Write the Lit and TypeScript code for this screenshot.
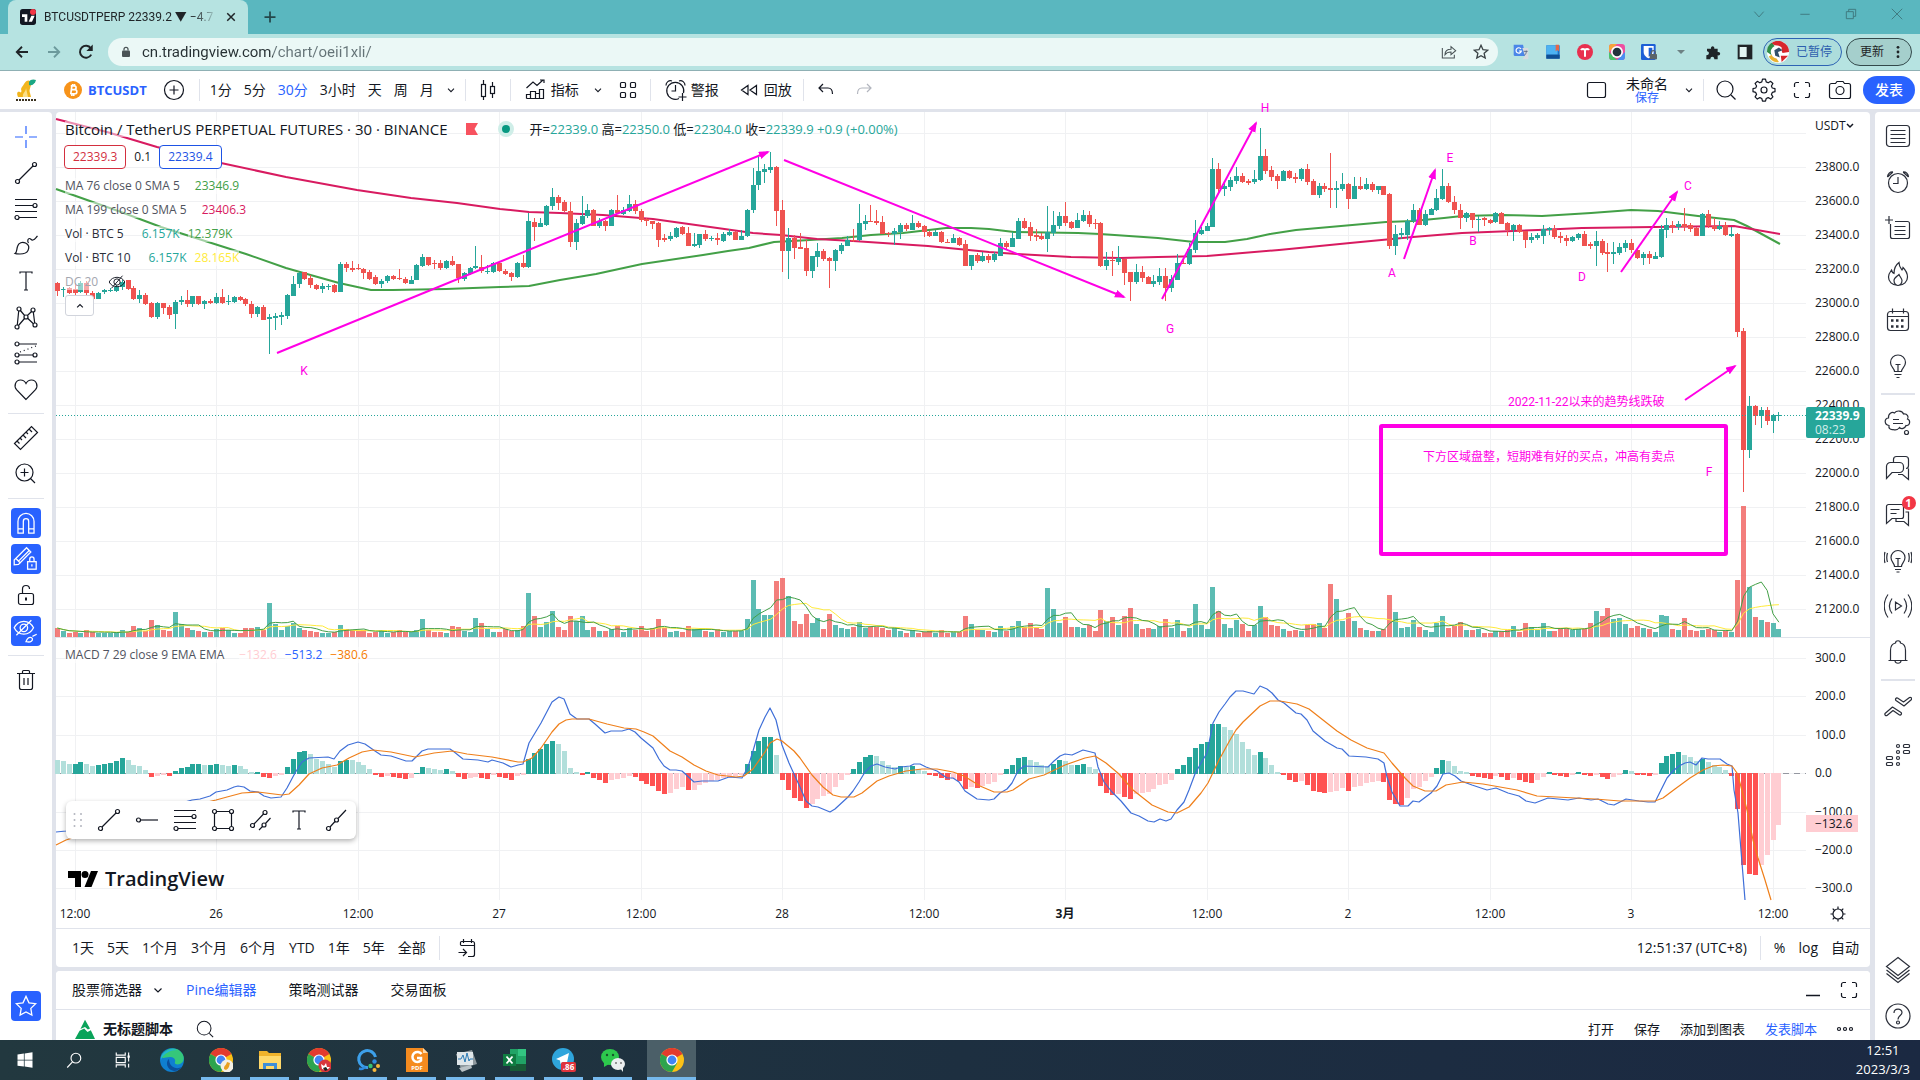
import { LitElement, html, svg, css } from "lit";
import { customElement } from "lit/decorators.js";

/* ---------- market data: one entry per 30-minute bar, in chart units ---------- */

// u = rising, d = falling; body top, body bottom, wick top, wick bottom
const CANDLES = `
d283,291,282,296 u289,290,287,297 d288,293,287,294
d289,293,283,295 u283,292,281,293 d283,293,281,297 d293,299,291,300 u293,299,292,299 u290,292,289,294 u290,291,288,292 u287,291,285,292 u282,287,280,290 d280,289,280,290
d288,299,286,300 u295,299,290,303 d295,304,293,305 d303,317,302,318 u303,317,302,319 d303,308,303,314 d307,315,305,319 u302,314,300,329 u300,302,296,305 d300,304,290,307
u296,304,296,307 d296,304,296,305 u301,304,300,309 d301,303,299,304 u297,303,293,304 d297,303,289,304 u301,302,295,305 u297,302,296,303 d297,300,296,301 d299,304,298,306
d304,314,301,318 u307,314,306,317 d307,320,305,320 u317,319,314,354 u316,318,313,330 u315,317,312,325 u295,316,294,319 u284,296,276,296 u273,284,272,288 d272,279,272,280
d278,285,275,288 d285,289,284,290 u286,289,283,293 u286,287,284,290 d285,292,284,293 u264,292,262,292 d264,268,262,272 d268,270,261,272 d268,269,264,270 d269,273,268,279
d272,279,270,280 d277,284,275,285 u281,284,279,288 u276,281,275,283 d276,279,275,280 d278,279,269,280 d279,283,277,284 u280,284,276,284 u265,280,264,280 u257,266,254,267
d257,265,257,266 d263,264,260,269 d263,268,260,270 u261,268,260,269 d261,265,256,266 d264,278,264,283 u273,279,272,281 u268,274,267,275 u266,268,246,269 d267,271,255,273
u271,272,265,274 u263,272,262,273 d263,271,262,272 d271,274,269,275 d273,277,272,281 u263,277,262,278 d263,267,255,268 u221,267,213,268 d222,227,218,241 u223,227,218,227
u206,225,205,226 u197,206,188,210 d197,203,195,210 d202,211,200,212 d211,242,202,247 u223,242,219,250 u216,224,196,225 u210,216,204,218 d210,226,209,226 u221,226,218,228
d221,226,220,231 u210,226,209,226 d210,213,195,214 u210,214,207,215 u204,211,195,212 d204,211,200,214 d211,220,209,222 d219,221,218,226 d221,224,221,229 d223,240,222,247
d238,240,234,242 u236,239,232,241 u228,237,227,238 d227,234,226,235 d233,246,227,246 u244,246,233,247 u234,245,234,248 d234,239,230,241 u238,239,236,241 d238,240,233,245
u234,241,232,242 u232,235,229,236 d232,240,231,240 u236,240,230,240 u210,236,209,237 u185,210,168,213 u171,185,157,190 u169,172,164,183 u167,170,152,173 d167,211,166,226
d210,251,200,272 u238,251,228,279 d238,248,235,259 d247,249,233,249 d248,271,240,276 u256,271,256,278 u251,257,243,267 d251,259,249,261 d258,261,257,288 u250,261,249,271
u245,251,243,254 u240,246,236,246 d240,241,229,242 u223,240,204,241 u221,224,215,230 d221,222,205,222 d221,223,210,225 d222,234,216,234 d233,234,232,237 u231,234,228,245
u225,232,223,239 d225,229,223,231 u223,230,215,230 d223,227,221,228 d226,232,225,237 d232,236,231,237 u232,236,230,236 d232,242,231,243 d242,243,239,243 u238,243,234,243
d238,245,237,246 d244,266,240,266 u255,266,255,270 d255,261,253,263 u256,261,252,262 d256,260,254,263 u254,260,252,262 u243,256,238,256 d243,247,241,249 u238,247,232,247
u221,239,218,239 d221,228,218,229 d227,236,222,241 d235,237,229,241 d236,239,233,240 u232,239,206,252 u225,233,211,236 u216,226,212,229 d216,223,202,226 d222,228,221,229
u220,228,213,228 u215,221,210,222 d215,224,211,227 d223,224,219,229 d223,266,222,267 u260,266,252,270 d260,261,251,276 u258,262,246,265 d259,273,259,285 d272,282,272,301
u272,282,264,284 d272,278,266,282 d277,284,276,284 u281,284,275,287 u276,282,268,285 d276,288,268,301 u279,288,275,292 u263,280,254,280 d263,264,259,264 u249,264,243,265
u233,250,220,253 u230,234,227,235 u226,231,223,231 u169,227,158,227 d169,189,163,192 u186,189,182,196 u180,187,177,191 u176,181,167,184 d176,182,173,183 d181,183,179,185
u179,182,170,184 u156,180,128,181 d156,171,149,174 d170,177,166,181 d176,181,174,189 u171,181,170,181 d171,178,170,179 d177,179,173,183 u169,179,168,181 d169,182,164,185
d181,195,179,195 u186,195,183,198 d186,189,183,192 d188,190,153,208 u188,190,181,208 u184,189,173,191 d184,199,183,209 u186,199,177,199 d186,189,177,190 u184,189,178,190
d184,190,182,192 u186,190,186,194 d186,195,186,195 d194,246,193,249 u234,246,225,255 u233,235,228,239 u221,235,219,240 u210,221,204,223 d210,225,208,225 u214,225,210,226
u209,215,208,215 u198,210,189,211 u186,199,169,200 d186,202,183,203 d202,210,196,214 d210,218,204,229 u213,218,212,222 d213,220,213,228 u219,220,216,232 d218,220,217,226
d220,223,219,224 u213,222,212,223 d213,224,212,224 d223,230,222,236 u225,230,224,241 d225,232,224,233 d231,240,231,248 u237,240,233,243 u235,238,233,240 u229,236,225,244
u228,230,227,235 d229,237,225,239 d236,238,232,243 d238,241,235,246 u237,241,236,242 u234,238,233,240 d234,246,231,246 d244,246,242,249 u241,246,231,266 d241,253,239,255
d252,254,243,272 u252,254,242,264 u247,253,243,255 u243,248,240,252 d243,250,239,253 d250,258,249,259 u254,258,252,265 d254,258,251,264 u256,259,252,259 u229,257,225,258
u225,230,218,238 d225,227,221,233 u224,227,221,230 d224,227,208,231 d225,229,223,232 d228,236,227,236 u214,236,213,236 d214,226,210,228 d226,229,218,231 u226,229,221,230
d225,235,222,236 u234,236,227,237 d234,332,233,337 d331,450,328,492 u406,450,396,458 d406,416,405,425 u410,416,407,428 d410,421,407,425 u415,421,414,433 u415,416,412,421
`.trim().split(/\s+/).map((t) => {
  const [top, bottom, high, low] = t.slice(1).split(",").map(Number);
  return { up: t[0] === "u", top, bottom, high, low };
});

const VOLUME = [
  9, 6, 4,
  5, 4, 7, 5, 4, 4, 4, 5, 7, 5,
  11, 9, 6, 17, 12, 7, 6, 25, 13, 9,
  7, 6, 5, 5, 8, 9, 7, 4, 4, 9,
  9, 10, 7, 34, 13, 7, 11, 14, 9, 7,
  6, 5, 4, 4, 5, 12, 8, 7, 6, 7,
  4, 5, 7, 4, 5, 7, 5, 5, 7, 18,
  7, 5, 5, 4, 11, 10, 6, 5, 19, 14,
  8, 5, 5, 8, 6, 7, 11, 44, 21, 10,
  15, 26, 10, 7, 21, 16, 21, 7, 10, 6,
  6, 8, 11, 5, 9, 7, 11, 6, 9, 18,
  9, 5, 6, 5, 11, 8, 8, 6, 5, 8,
  5, 6, 6, 6, 18, 57, 28, 22, 22, 56,
  59, 41, 16, 13, 23, 14, 19, 8, 23, 12,
  9, 8, 10, 15, 9, 10, 10, 9, 7, 9,
  6, 4, 7, 4, 5, 6, 4, 7, 4, 5,
  5, 21, 13, 7, 7, 6, 5, 11, 6, 11,
  16, 10, 14, 9, 8, 49, 28, 14, 20, 10,
  10, 9, 12, 6, 27, 16, 20, 12, 21, 29,
  13, 8, 9, 8, 11, 18, 9, 17, 6, 9,
  33, 12, 8, 50, 26, 13, 9, 17, 13, 6,
  12, 31, 20, 12, 11, 8, 6, 7, 6, 12,
  13, 14, 9, 53, 38, 16, 24, 16, 9, 7,
  6, 6, 8, 42, 25, 9, 10, 17, 10, 7,
  5, 14, 21, 9, 11, 15, 7, 7, 8, 4,
  4, 6, 6, 7, 11, 5, 14, 10, 7, 14,
  6, 6, 9, 9, 7, 8, 8, 14, 26, 21,
  29, 18, 19, 13, 9, 11, 9, 8, 5, 22,
  21, 8, 7, 19, 7, 6, 7, 8, 7, 5,
  6, 5, 57, 131, 50, 20, 17, 15, 14, 8,
];

const HISTOGRAM = [
  13, 12, 9,
  9, 11, 9, 7, 8, 9, 10, 12, 15, 13,
  8, 7, 3, -3, -2, -1, -2, 2, 5, 6,
  9, 9, 8, 8, 9, 8, 7, 8, 7, 4,
  1, 1, -3, -4, -2, -1, 6, 14, 21, 22,
  19, 14, 12, 9, 6, 12, 13, 12.8, 11, 8,
  4, -1, -3, -2, -3, -4, -5, -4, 0, 6,
  5.5, 4, 3, 4, 2, -3, -5, -4, -3, -4,
  -4.5, -1, -3, -4, -6, -2, -1, 14, 20, 24,
  29, 32, 29, 22, 5, 1, -1, 1, -4, -6,
  -9, -6, -5, -4, -2, -2.5, -7, -10, -12, -17,
  -20, -19, -15, -13, -16, -15.5, -11, -9, -7, -6,
  -4, -3, -2, -1, 9, 22, 32, 36, 36.5, 18,
  -6, -16, -24, -27, -34, -30, -25, -22, -20, -13,
  -6, -1, 4, 11, 16, 18, 17, 12, 8, 6,
  7, 6, 7, 4, 2, -1, -2, -4, -6, -5,
  -7, -15, -13, -14, -12, -10, -8, -1, 4, 8,
  15, 16, 13, 11, 8, 7, 9, 13, 12, 8,
  8, 9, 6, 4, -12, -19, -21, -20, -23, -25,
  -20, -19, -18, -15, -11, -10, -6, 4, 8, 16,
  25, 29, 31, 49, 49.5, 46, 43, 39, 31, 24,
  18, 21, 15, 8, 1, -1, -6, -8, -7, -11,
  -17, -18, -18.5, -18, -17, -14, -17, -13, -12, -9,
  -8, -7, -8, -26, -30, -30.5, -24, -15, -13, -7,
  -3, 5, 13, 12, 7, 2, 1, -2, -3, -4,
  -4.5, -2, -3, -6, -4, -6, -8, -8.5, -6, -3,
  1, -0.5, -1.5, -2.5, -1, 1, -1, -1.5, -0.5, -2.5,
  -4.5, -3, -1, 3, 2, -0.5, -1, -1.5, -0.5, 10,
  17, 19, 21, 18, 16, 12, 14, 11, 8, 6,
  3, -2, -35, -91, -100, -101, -91, -81, -66, -51,
];

const MA76 =
  "56,189 121,212 161,227 246,254 286,268 307,274 339,283 371,290 393,290 446,289 500,287 529,286 560,280 596,274 642,264 703,255 728,251 749,248 774,242 810,240 842,238 871,235 903,233 946,228 971,228 989,229 1014,232 1078,233 1100,234 1158,238 1194,242 1225,242 1247,239 1270,234 1296,230 1341,226 1386,222 1413,221 1444,218 1462,216 1502,215 1542,216 1591,213 1631,210 1658,211 1698,216 1734,220 1747,226 1780,244";
const MA199 =
  "56,119 107,132 157,147 221,163 286,177 357,190 411,198 457,203 500,209 529,212 560,213 603,215 653,219 703,226 753,233 781,235 817,239 853,241 928,246 989,252 1017,254 1071,257 1120,258 1158,257 1207,256 1279,250 1350,243 1413,237 1462,233 1538,230 1582,228 1654,227 1734,226 1780,234";
const MACD_LINE =
  "56,832 66,831 120,820 192,800 200,799 210,796 216,792 227,790 234,787 238,786 244,787 250,791 258,792 264,796 271,798 281,797 287,788 295,773 302,762 309,758 328,757 334,759 340,751 348,745 358,742 365,744 375,751 381,755 391,756 406,761 412,761 422,751 428,749 450,749 453,751 463,759 478,760 488,762 492,760 503,763 511,767 518,765 523,764 529,743 541,723 552,702 559,697 564,699 570,714 577,719 589,719 595,724 605,733 611,731 622,731 629,729 635,732 641,738 653,748 659,759 664,766 670,770 676,770 682,771 694,782 702,781 718,781 729,777 742,778 748,767 753,751 759,730 765,717 770,708 776,720 782,745 789,763 794,774 800,787 806,801 812,806 818,807 830,812 835,809 848,797 853,791 859,782 865,772 871,766 877,764 885,767 895,769 901,767 910,766 914,764 920,764 926,767 937,771 947,778 953,778 959,782 965,791 977,799 989,800 994,799 1000,793 1007,789 1012,783 1018,771 1024,766 1048,767 1054,761 1060,756 1065,754 1072,755 1083,750 1095,753 1098,767 1104,782 1112,792 1121,801 1131,813 1139,816 1148,821 1154,822 1160,819 1166,821 1171,819 1177,810 1184,802 1189,790 1195,774 1201,763 1207,753 1213,723 1219,712 1225,704 1230,697 1236,691 1243,691 1254,694 1260,686 1267,689 1272,693 1278,700 1284,703 1296,713 1301,714 1307,720 1313,731 1325,741 1337,748 1342,749 1349,756 1366,757 1378,759 1384,763 1387,777 1392,792 1400,806 1408,806 1413,801 1419,802 1431,793 1437,786 1443,774 1449,773 1455,776 1461,781 1472,785 1487,790 1496,788 1508,793 1519,796 1526,801 1535,803 1548,798 1568,800 1579,798 1591,800 1598,799 1608,804 1614,805 1626,799 1639,801 1648,802 1655,802 1661,790 1667,778 1673,771 1679,766 1685,763 1690,762 1696,765 1702,758 1708,759 1720,759 1727,764 1732,766 1734,790 1738,813 1742,863 1745,900";
const SIGNAL_LINE =
  "56,845 66,840 130,820 216,800 227,797 242,793 258,792 282,795 289,794 299,785 309,774 322,768 337,765 349,758 362,752 373,750 391,752 415,757 434,753 452,751 467,754 492,757 518,762 523,762 532,758 541,748 552,732 559,724 566,720 572,719 589,719 607,724 624,728 636,729 644,732 653,736 670,751 682,757 694,765 706,771 718,775 736,777 744,776 753,769 765,752 770,743 777,739 782,741 794,751 800,758 812,775 823,787 833,795 841,797 854,797 862,793 877,781 889,776 906,771 922,769 937,769 953,772 964,776 972,781 980,786 994,792 1007,792 1013,790 1029,779 1044,775 1065,765 1085,758 1095,756 1106,763 1119,774 1133,790 1152,805 1168,812 1177,813 1189,807 1201,793 1208,783 1219,760 1230,740 1236,730 1243,722 1260,706 1270,701 1280,701 1297,704 1309,709 1337,731 1351,740 1367,748 1384,753 1392,763 1405,778 1413,786 1425,791 1436,791 1446,785 1463,782 1483,784 1517,790 1537,796 1595,799 1620,801 1655,801 1663,798 1675,789 1690,778 1703,770 1713,766 1723,765 1732,766 1737,773 1740,783 1747,810 1753,840 1758,858 1765,880 1771,900";

const STEP = 5.896;
const VOL_BASE = 637;
const ZERO = 773;
const barX = (n: number) => 75 + (n - 3) * STEP;
const pixelX = (n: number) => Math.floor(barX(n));

const average = (n: number) =>
  VOLUME.map((_, i) => {
    const part = VOLUME.slice(Math.max(0, i - n + 1), i + 1);
    const mean = part.reduce((a, b) => a + b, 0) / part.length;
    return `${barX(i).toFixed(1)},${(VOL_BASE - mean).toFixed(1)}`;
  }).join(" ");

const histColor = (v: number, prev: number) =>
  v >= 0 ? (v >= prev ? "#26a69a" : "#b2dfdb") : v <= prev ? "#ff5252" : "#ffcdd2";

const TIMES = ["12:00", "26", "12:00", "27", "12:00", "28", "12:00", "3月", "12:00", "2", "12:00", "3", "12:00"];
const ARROWS = [
  [277, 353, 768, 152], [784, 160, 1124, 297], [1162, 299, 1256, 123],
  [1404, 259, 1435, 170], [1621, 272, 1677, 192], [1685, 400, 1735, 366],
];
const MARKS: [string, number, number][] = [
  ["K", 304, 371], ["H", 1265, 108], ["E", 1450, 158], ["C", 1688, 186], ["B", 1473, 241],
  ["A", 1392, 273], ["D", 1582, 277], ["G", 1170, 329], ["F", 1709, 472],
];

/* ---------- icons, drawn on a 28 x 28 grid ---------- */

const ICONS: Record<string, unknown> = {
  cross: svg`<path stroke="#2962ff" d="M14 3v8M14 17v8M3 14h8M17 14h8"/>`,
  trend: svg`<circle cx="5.500" cy="22.500" r="2"/><circle cx="22.500" cy="5.500" r="2"/><path d="M7 21 21 7"/>`,
  fib: svg`<path d="M3 4.500h22M3 10.500h18M3 16.500h22M7 22.500h18"/><circle cx="23" cy="10.500" r="2"/><circle cx="5" cy="22.500" r="2"/>`,
  brush: svg`<path d="M3 22.500c2-1 1.500-4 2.500-7 1-4 5-5 8-3.500s4 4.500 2.500 7.500-4 3.500-8 3.500c-2 0-4 0-5-.5zM16.500 12c-1.500-2-.5-4.500 1-4.500s1.500 2 3.500 1.500 3-2.500 4.500-4"/>`,
  text: svg`<path d="M8 6.500V5h12v1.500M14 5v18M12 23h4"/>`,
  pattern: svg`<circle cx="7" cy="6" r="2"/><circle cx="21" cy="7" r="2"/><circle cx="14" cy="14" r="2"/><circle cx="5" cy="24" r="2"/><circle cx="23" cy="22" r="2"/><path d="M6.700 8 5.300 22M8.400 7.500l4.200 5M19.600 8.500l-4.200 4M21.300 9l1.400 11M12.500 15.500l-6 7M15.600 15.200l5.800 5.600"/>`,
  forecast: svg`<circle cx="5" cy="5" r="2"/><circle cx="5" cy="16" r="2"/><circle cx="5" cy="23" r="2"/><circle cx="23" cy="16" r="2"/><path d="M7 5h18M7 16h14M7 23h18"/><path stroke-dasharray="1 3" d="M8 13 24 7"/>`,
  heart: svg`<path d="M14 24.500 4.500 14.700C1.500 11 3.500 5 8.500 5c2.500 0 4.500 1.500 5.500 3.500C15 6.500 17 5 19.500 5c5 0 7 6 4 9.700z"/>`,
  ruler: svg`<path d="m2.500 19.500 17-17 6 6-17 17zM8 14l2 2M11 11l3 3M14 8l2 2M17 5l3 3M5 17l2.500 2.500"/>`,
  zoom: svg`<circle cx="12.500" cy="12.500" r="8.500"/><path d="M18.500 18.500 23 23M8.500 12.500h8M12.500 8.500v8"/>`,
  magnet: svg`<path d="M6.500 23.500v-11a7.500 7.500 0 0 1 15 0v11h-5v-11a2.500 2.500 0 0 0-5 0v11zM6.500 19.500h5M16.500 19.500h5"/>`,
  pencilLock: svg`<path d="M3 19.500V15L14.500 3.500l4 4L7 19zM5 14l4 4M7 16 17 6"/><rect x="15.500" y="16.500" width="8" height="7"/><path d="M17.500 16v-2a2 2 0 0 1 4 0v2M19.500 19v2"/>`,
  lock: svg`<rect x="6.500" y="12.500" width="15" height="11" rx="2"/><path d="M10.500 12.500V8a3.500 3.500 0 0 1 7 0"/><path stroke-width="2" d="M14 16.500v3"/>`,
  eyeOff: svg`<path d="M3 11c4-8 14-8 18 0-4 8-14 8-18 0zM5 18 19 4"/><circle cx="12" cy="11" r="3.500"/><path d="M14 24c1-3 2-4 4-4s3 2 1 3.500-3 .5-5 .5zM20 19l4-2"/>`,
  trash: svg`<path d="M5 7.500h18M7.500 7.500v14a2 2 0 0 0 2 2h9a2 2 0 0 0 2-2v-14M10.500 7.500v-2a1 1 0 0 1 1-1h5a1 1 0 0 1 1 1v2M12 12v7M16 12v7"/>`,
  star: svg`<path d="m14 5 2.800 6 6.200.8-4.500 4.400 1 6.300-5.500-3-5.500 3 1-6.300L5 11.800l6.200-.8z"/>`,
  list: svg`<rect x="2.500" y="3.500" width="23" height="21" rx="3"/><path d="M6.500 8.500h15M6.500 12.500h15M6.500 16.500h15M6.500 20.500h15"/>`,
  alarm: svg`<circle cx="14" cy="15" r="9.500"/><path d="M14 9v6.500h-5M3.500 9A5 5 0 0 1 9 4M24.500 9A5 5 0 0 0 19 4M3.500 9 9 4M24.500 9 19 4"/>`,
  dataWin: svg`<path d="M6.500 10v12.500a2 2 0 0 0 2 2h15a2 2 0 0 0 2-2v-13a2 2 0 0 0-2-2H11M5 2v8M1 6h8M10.500 12.500h11M10.500 16.500h11M10.500 20.500h11"/>`,
  flame: svg`<path d="M14 25.500c-6 0-9.500-4-9.500-8.500 0-3 1.500-5 3-7 .5 2 1 3 2.500 3.500C10 9 11.500 5 15 2.500c0 4 1.500 5.500 3 7.500.5-.8.800-1.500 1-2.500 3 3 4.500 6 4.500 9.500 0 4.500-3.500 8.500-9.500 8.500zm-4-5c0 3 2 5 4 5s4-2 4-5c0-2-2-3.500-3-6-2 2-5 3.500-5 6z"/>`,
  calendar: svg`<rect x="3.500" y="5.500" width="21" height="19" rx="3"/><path d="M3.500 10.500h21M8.500 2.500v5M19.500 2.500v5"/><path stroke-width="2.500" stroke-dasharray="2.500 2.500" d="M7 14.500h15M7 20.500h15"/>`,
  bulb: svg`<path d="M10.500 19.500c0-3-4-4.500-4-9a7.500 7.500 0 0 1 15 0c0 4.500-4 6-4 9zM10.500 22.500h7M12.500 25.500h3M14 19v-6M11.500 12.500h5"/>`,
  cloud: svg`<path d="M9 21.500c-3 .5-4.500-1.500-4-4C0 17 0 10 4.500 10 4 5.500 8 3.500 10.500 5c2-3 8-2.500 9 1 4-.5 5.500 3 4 5 3.500 1.500 2.500 7-1.500 6.500-1 3-4.500 4-6.500 2-1.500 2-4 3-6.500 2zM9 11.500h6M9 15.500h10"/><circle cx="22.500" cy="24.500" r="2"/>`,
  chats: svg`<path d="M9.500 8V5.500a3 3 0 0 1 3-3h9a3 3 0 0 1 3 3v6c0 2-1 3-2.500 3M2.500 24.500v-12a4 4 0 0 1 4-4h9a4 4 0 0 1 4 4v2a4 4 0 0 1-4 4H8zM14 20.500h4.500l6 5v-11"/>`,
  notes: svg`<path d="M2.500 23.500v-17a2 2 0 0 1 2-2h13a2 2 0 0 1 2 2v10a2 2 0 0 1-2 2H8zM6.500 9.500h9M6.500 13.500h6M12 19v2.500h8l4.500 4V12h-3"/>`,
  live: svg`<path d="M10.500 20.500c0-3-3.500-4.500-3.500-9a7 7 0 0 1 14 0c0 4.500-3.500 6-3.500 9zM11 23.500h6M12.500 26h3M14 20v-7M11.500 12.500h5M3.500 7c-1 3-1 6 0 9M1 6c-1.200 4-1.200 7 0 11M24.500 7c1 3 1 6 0 9M27 6c1.200 4 1.200 7 0 11"/>`,
  stream: svg`<path d="M4 2.500c-5 7-5 16 0 23M24 2.500c5 7 5 16 0 23M8 6.500c-3.500 5-3.500 10 0 15M20 6.500c3.500 5 3.500 10 0 15M11.500 10v8l6-4z"/>`,
  bell: svg`<path d="M4.500 22.500h19M6.500 22.500v-10C6.500 8 9 5.500 11.500 5c0-3 5-3 5 0 2.500.5 5 3 5 7.500v10M11 23c.5 3 5.500 3 6 0"/>`,
  wave: svg`<path stroke-linejoin="round" d="M1 19.500 8.500 13l8.500 5.500a1.500 1.500 0 0 1-1.500 2.500L9 16.500l-6 5a1.500 1.500 0 0 1-2-2zM12 6.500a1.500 1.500 0 0 1 1.500-2.500L19.500 8l6-4.500a1.500 1.500 0 0 1 2 2L20 12z"/>`,
  dom: svg`<rect x="2.500" y="16.500" width="6" height="3" rx="1"/><rect x="2.500" y="22.500" width="6" height="3" rx="1"/><rect x="19.500" y="4.500" width="6" height="3" rx="1"/><rect x="19.500" y="10.500" width="6" height="3" rx="1"/><circle cx="14" cy="6" r="1.500"/><circle cx="14" cy="12" r="1.500"/><circle cx="14" cy="18" r="1.500"/><circle cx="14" cy="24" r="1.500"/>`,
  layers: svg`<path d="m14 1.500 11.500 9L14 19.500l-11.500-9zM2.500 14 14 23l11.500-9M2.500 17.500 14 26.500l11.500-9"/>`,
  help: svg`<circle cx="14" cy="14" r="12"/><path d="M10 11c0-5 8-5 8-.5 0 3-4 3-4 7"/><circle cx="14" cy="20.500" r="1.500"/>`,
  plus: svg`<circle cx="14" cy="14" r="9.500"/><path d="M14 9.500v9M9.500 14h9"/>`,
  down: svg`<path d="m10.500 12.500 3.500 3.500 3.500-3.500"/>`,
  candles: svg`<path d="M9.500 4v4M9.500 20v4M18.500 6v5M18.500 17v5"/><rect x="7.500" y="8.500" width="4" height="12"/><rect x="16.500" y="10.500" width="4" height="7"/>`,
  indicators: svg`<path d="M4.500 12 11 6l4 3.500L21 4M18 4h4v3M4.500 22.500v-4h4v4M8.500 22.500v-7h5v7M13.500 22.500v-5h4v5M17.500 22.500v-9h4v9zM4.500 22.500h17"/>`,
  grid: svg`<rect x="6.500" y="6.500" width="5" height="5" rx="1"/><rect x="16.500" y="6.500" width="5" height="5" rx="1"/><rect x="6.500" y="16.500" width="5" height="5" rx="1"/><rect x="16.500" y="16.500" width="5" height="5" rx="1"/>`,
  alarmAdd: svg`<path d="M17 22.500A8.500 8.500 0 1 1 21.500 17M13.500 9v6h-4M4 9.500A4.500 4.500 0 0 1 10 5M23 9.500A4.500 4.500 0 0 0 17 5M20.500 17v8M16.500 21h8"/>`,
  rewind: svg`<path d="M13 9.500v9L6.500 14zM21.500 9.500v9L15 14z"/>`,
  undo: svg`<path d="m11 8-4 4 4 4M7.500 12H16c3 0 4.500 2 4.500 6"/>`,
  redo: svg`<path d="m17 8 4 4-4 4M20.500 12H12c-3 0-4.500 2-4.500 6"/>`,
  frame: svg`<rect x="4.500" y="6.500" width="18" height="15" rx="2"/>`,
  search: svg`<circle cx="13" cy="13" r="8"/><path d="m19 19 4.500 4.500"/>`,
  gear: svg`<circle cx="14" cy="14" r="3"/><path stroke-linejoin="round" d="M12.500 4.500h3l.7 2.700 2 .9 2.500-1.500 2.200 2.200-1.500 2.500.9 2 2.700.7v3l-2.700.7-.9 2 1.500 2.500-2.200 2.200-2.500-1.500-2 .9-.7 2.700h-3l-.7-2.700-2-.9-2.500 1.500-2.200-2.200 1.500-2.500-.9-2-2.700-.7v-3l2.700-.7.900-2-1.500-2.500 2.200-2.200 2.500 1.500 2-.9z" transform="translate(0 -1.300)"/>`,
  full: svg`<path d="M6.500 11V8.500a2 2 0 0 1 2-2H11M17 6.500h2.500a2 2 0 0 1 2 2V11M21.500 17v2.500a2 2 0 0 1-2 2H17M11 21.500H8.500a2 2 0 0 1-2-2V17"/>`,
  camera: svg`<path d="M9.500 7.500 11 5.500h6l1.500 2h4a2 2 0 0 1 2 2v11a2 2 0 0 1-2 2h-17a2 2 0 0 1-2-2v-11a2 2 0 0 1 2-2z"/><circle cx="14" cy="14.500" r="4"/>`,
  goto: svg`<path d="M7.500 11V8.500a1 1 0 0 1 1-1h11a2 2 0 0 1 2 2v11a2 2 0 0 1-2 2H15M7.500 11.500h14M10.500 5v4M18.500 5v4M5.500 18.500h8M10 15l3.500 3.500L10 22"/>`,
  minimize: svg`<path stroke-width="1.500" d="M7 19.500h14"/>`,
  dots: svg`<circle cx="8" cy="14" r="1.500"/><circle cx="14" cy="14" r="1.500"/><circle cx="20" cy="14" r="1.500"/>`,
  sun: svg`<circle cx="14" cy="14" r="5"/><path d="M14 6.500V9M14 19v2.500M6.500 14H9M19 14h2.500M8.700 8.700l1.800 1.800M17.500 17.500l1.800 1.800M19.300 8.700l-1.800 1.800M10.500 17.500l-1.800 1.800"/>`,
  ray: svg`<circle cx="5.500" cy="14" r="2"/><path d="M7.500 14H25"/>`,
  rect: svg`<path d="M8 5.500h12M8 22.500h12M5.500 8v12M22.500 8v12"/><circle cx="5.500" cy="5.500" r="2"/><circle cx="22.500" cy="5.500" r="2"/><circle cx="5.500" cy="22.500" r="2"/><circle cx="22.500" cy="22.500" r="2"/>`,
  channel: svg`<circle cx="5.500" cy="19.500" r="2"/><circle cx="18" cy="6.500" r="2"/><circle cx="17" cy="19" r="2"/><path d="M7 18 16.500 8M12 24l3.500-3.500M18.500 17.500l5-5.500"/>`,
  line: svg`<circle cx="5.500" cy="22.500" r="2"/><circle cx="13.500" cy="14" r="2"/><path d="m7 21 5-5.500M15 12.500 23 4"/>`,
  grip: svg`<g fill="#b2b5be" stroke="none"><circle cx="10.500" cy="8" r="1"/><circle cx="17" cy="8" r="1"/><circle cx="10.500" cy="14" r="1"/><circle cx="17" cy="14" r="1"/><circle cx="10.500" cy="20" r="1"/><circle cx="17" cy="20" r="1"/></g>`,
  hidden: svg`<path d="M4 14c4-8 16-8 20 0-4 8-16 8-20 0zM7 22 21 6"/><circle cx="14" cy="14" r="4"/>`,
  up: svg`<path stroke-width="2" d="m9 16.500 5-5 5 5"/>`,
};

const icon = (name: string, size = 28) =>
  html`<svg class="icon" width=${size} height=${size} viewBox="0 0 28 28" aria-hidden="true">${ICONS[name]}</svg>`;

/* ---------- browser and desktop glyphs, each on a 24 x 24 grid ---------- */

const chromeMark = svg`
  <circle cx="12" cy="12" r="12" fill="#fbc116"/>
  <path fill="#e33b2e" d="M12 12 1.600 6A12 12 0 0 1 22.400 6z"/>
  <path fill="#2da44e" d="M1.600 6A12 12 0 0 0 12 24l5.200-9L12 12z"/>
  <circle cx="12" cy="12" r="5.600" fill="#fff"/><circle cx="12" cy="12" r="4.400" fill="#4285f4"/>`;

const GLYPHS: Record<string, unknown> = {
  windows: svg`<path fill="#fff" d="M2 4.500 10.500 3.300v8.200H2zM11.500 3.200 22 1.700v9.800H11.500zM2 12.500h8.500v8.200L2 19.500zM11.500 12.500H22v9.800l-10.500-1.500z"/>`,
  search: svg`<g fill="none" stroke="#fff" stroke-width="1.500"><circle cx="14.500" cy="9.500" r="6.500"/><path d="m10 14.500-7 7.500"/></g>`,
  tasks: svg`<g fill="none" stroke="#fff" stroke-width="1.500"><path d="M3 2v3.500h12V2M3 22v-3.500h12V22M3 8.500h12v7H3zM19.500 2v12M19.500 17v5"/></g><path fill="#fff" d="M18 6h3v3h-3z"/>`,
  edge: svg`<circle cx="12" cy="12" r="12" fill="#0f7fd0"/><path fill="#35c77a" d="M1 9C4 1 14-2 20 3c5 4 5 11 0 13-3 1-6 0-5-2 1-3-2-5-5-5-4 0-7 2-9 0z"/><path fill="#1fb4d8" d="M1 9C4 2 12 0 17 2c-6 0-14 3-16 10z"/><path fill="#0b4f9c" d="M9 11c-4 3-2 11 5 12 3 0 6-2 8-4-6 3-13 0-13-8z"/>`,
  chromeA: svg`${chromeMark}<circle cx="18" cy="18" r="6.500" fill="#f4f0e4"/><path fill="#e8a020" d="M15 21c0-4 2-3 3-7l3 1c-1 4-1 5-4 7z"/>`,
  chromeB: svg`${chromeMark}<circle cx="18" cy="18" r="6.500" fill="#d9353c"/><path fill="#fff" d="m14 16 3 2 2-3 1 4 3 0-3 3-5-1z"/><path fill="#222" d="m16 20 3-1 2 3-3 1z"/>`,
  chrome: svg`${chromeMark}`,
  folder: svg`<path fill="#f0b32b" d="M1 3h8l2 2h12v16H1z"/><path fill="#ffd96b" d="M1 8h22v13H1z"/><path fill="#3e8ed8" d="M5 15h14v6h-3v-3H8v3H5z"/>`,
  q: svg`<path fill="none" stroke="#3da0ea" stroke-width="3" d="M12 19.500A8.500 8.500 0 1 1 19.500 9"/><path fill="none" stroke="#2f8be0" stroke-width="2.500" d="M3 20.500c3 1 5 0 6-2"/><circle cx="18.500" cy="13.500" r="2.200" fill="#2f8be0"/><circle cx="22" cy="18" r="2" fill="#f6b73c"/><circle cx="14.500" cy="18" r="2.200" fill="#38c172"/><circle cx="18.500" cy="22" r="2" fill="#f6b73c"/>`,
  pdf: svg`<path fill="#f58b1f" d="M1 0h17l5 5v19H1z"/><path fill="#ffd9ac" d="M18 0v5h5z"/><path fill="none" stroke="#fff" stroke-width="2.500" d="M16.500 6A5 5 0 1 0 16 12.500V10h-4"/><text x="12" y="22" font-size="6" font-weight="700" fill="#fff" text-anchor="middle">PDF</text>`,
  monitor: svg`<path fill="#8f999e" d="M2 6 18 2l5 14-16 5z"/><path fill="#dfe6e9" d="M3 4h16v13H3z"/><path fill="none" stroke="#2a7ab5" d="M4 11h3l2-4 2 7 2-9 2 8 1-2h3"/><path fill="#b9c1c5" d="m5 20 12-3 1 3-10 4z"/>`,
  excel: svg`<path fill="#21a366" d="M7 1h16v22H7z"/><path fill="#33c481" d="M15 1h8v7h-8z"/><path fill="#185c37" d="M7 16h16v7H7z"/><path fill="#107c41" d="M0 6h13v12H0z"/><path stroke="#fff" stroke-width="1.800" d="m3.500 8.500 6 7M9.500 8.500l-6 7"/>`,
  telegram: svg`<circle cx="11" cy="11" r="11" fill="#2fa5dc"/><path fill="#fff" d="M4 11 17 5l-2.500 12-4-3-2 2-.5-3.500z"/><rect x="9" y="14" width="15" height="10" rx="2" fill="#e0333c"/><text x="16.500" y="22" font-size="8" font-weight="700" fill="#fff" text-anchor="middle">.86</text>`,
  wechat: svg`<ellipse cx="9" cy="9" rx="9" ry="8" fill="#2dc84d"/><path fill="#2dc84d" d="m3 14 0 5 5-3z"/><ellipse cx="17" cy="16" rx="7" ry="6" fill="#eceff0"/><path fill="#eceff0" d="m19 20 3 4 0-5z"/><circle cx="6" cy="7" r="1.200" fill="#17552a"/><circle cx="12" cy="7" r="1.200" fill="#17552a"/><circle cx="15" cy="15" r="1" fill="#777"/><circle cx="20" cy="15" r="1" fill="#777"/>`,
  back: svg`<path fill="none" stroke="#1f2427" stroke-width="2.400" d="M20 12H5m7-7-7 7 7 7"/>`,
  forward: svg`<path fill="none" stroke="#6c9a9c" stroke-width="2.400" d="M4 12h15m-7-7 7 7-7 7"/>`,
  reload: svg`<path fill="none" stroke="#1f2427" stroke-width="2.600" d="M19 15.500A8 8 0 1 1 18.500 7"/><path fill="#1f2427" d="M21 2v8.500h-8.500z"/>`,
  padlock: svg`<rect x="4" y="9" width="16" height="13" rx="2" fill="#4a5356"/><path fill="none" stroke="#4a5356" stroke-width="2.500" d="M8 9V6.500a4 4 0 0 1 8 0V9"/>`,
  share: svg`<path fill="none" stroke="#4a5356" stroke-width="1.600" d="M2 6v15h18v-5M6 16c0-6 4-8 9-8V4l7 6-7 6v-4c-4 0-7 1-9 4z"/>`,
  bookmark: svg`<path fill="none" stroke="#3a4245" stroke-width="2" d="m12 2 3 6.600 7 .7-5.300 4.700 1.600 7L12 17.500 5.700 21l1.600-7L2 9.300l7-.7z"/>`,
  translate: svg`<path fill="#4b86e8" d="M1 1h14l4 17H3a2 2 0 0 1-2-2z"/><path fill="#d7dbe0" d="M14 6h8a1 1 0 0 1 1 1v15a1 1 0 0 1-1 1h-8l4-5z"/><path fill="none" stroke="#fff" stroke-width="1.800" d="M12 7.500a4 4 0 1 0 .5 3H9"/><path fill="none" stroke="#5b6b86" stroke-width="1.400" d="M16 11h6M20 10c0 4-1 5-3 7"/>`,
  book: svg`<path fill="#1d6fc4" d="M2 2h20v20H2z"/><path fill="#4db2f2" d="M2 2h17v14H2z"/><path fill="#0f4f94" d="M2 16h20v6H2z"/><path fill="#e4664a" d="M16 1h5v10l-2.500-2L16 11z"/>`,
  redT: svg`<circle cx="12" cy="12" r="12" fill="#e8304f"/><path fill="none" stroke="#fff" stroke-width="3" d="M6 9c1-2 4-2 6 0 2-2 5-2 6 0M12 19V9"/>`,
  lens: svg`<rect width="24" height="24" rx="5" fill="#ee4fa0"/><path fill="#f6a53a" d="M0 12V5a5 5 0 0 1 5-5h7z"/><path fill="#47c46b" d="M0 12v7a5 5 0 0 0 5 5h7z"/><path fill="#4a8ff0" d="M24 12v7a5 5 0 0 1-5 5h-7z"/><circle cx="12" cy="12" r="9" fill="#fff"/><circle cx="12" cy="12" r="6.500" fill="#22343d"/>`,
  shield: svg`<rect width="22" height="24" rx="2" fill="#1c5fd6"/><path fill="#fff" d="M4 3h15v9c0 5-4 8-7.500 9.500C8 20 4 17 4 12z"/><path fill="#1c5fd6" d="M11.500 5.500H17V12c0 3-2 5-5.500 7z"/><rect x="13" y="15" width="11" height="8" rx="1" fill="#5b6468"/><path fill="none" stroke="#5b6468" stroke-width="1.800" d="M15.500 15v-2a3 3 0 0 1 6 0v2"/>`,
  caret: svg`<path fill="#6d8284" d="M4 8h16l-8 8z"/>`,
  puzzle: svg`<path fill="#1f2427" d="M3 7h6c-1-5 6-5 5 0h5v5c5-1 5 6 0 5v6h-5c0-5-6-5-6 0H2v-6c5 0 5-6 1-6z"/>`,
  panel: svg`<path fill="#1f2427" d="M1 1h22v22H1z"/><path fill="#e2f4f2" d="M4 4.500h10.500v15H4z"/>`,
  avatar: svg`<circle cx="12" cy="12" r="12" fill="#fff"/><path fill="#d8272c" d="M4 3a12 12 0 0 1 20 9l-7 1-4-7z"/><path fill="#2f8d46" d="M0 12A12 12 0 0 1 5 2l5 5-4 9z"/><path fill="#e9b22f" d="M2 17l5-3 6 9c-5 1-9-2-11-6z"/><path fill="#fff" d="M16 7a7 7 0 1 0 0 10z"/><path fill="#31506b" d="m8 10 5-3 4 3-5 2 2 6-5-2z"/><path fill="#d8272c" d="m15 16 8 0-7 7z"/>`,
  more: svg`<g fill="#1f2427"><circle cx="12" cy="4" r="2.400"/><circle cx="12" cy="12" r="2.400"/><circle cx="12" cy="20" r="2.400"/></g>`,
  winChevron: svg`<path fill="none" stroke="#3d7479" stroke-width="1.500" d="m4 8 8 9 8-9"/>`,
  winMin: svg`<path fill="none" stroke="#3d7479" stroke-width="1.500" d="M4 12.500h16"/>`,
  winMax: svg`<path fill="none" stroke="#3d7479" stroke-width="1.500" d="M4 8h12v12H4zM8 8V4h12v12h-4"/>`,
  winClose: svg`<path fill="none" stroke="#3d7479" stroke-width="1.500" d="m3 3 18 18M21 3 3 21"/>`,
  tabClose: svg`<path fill="none" stroke="#1f2427" stroke-width="3.500" d="m3 3 18 18M21 3 3 21"/>`,
  tabAdd: svg`<path fill="none" stroke="#24474b" stroke-width="3.500" d="M12 1v22M1 12h22"/>`,
  site: svg`<rect width="24" height="24" rx="4" fill="#131722"/><path fill="#fff" d="M3 8h8v11H7v-7H3zM17 10h5l-4 9h-5z"/><circle cx="19.500" cy="4.500" r="4.500" fill="#f23645"/>`,
  bitcoin: svg`<circle cx="12" cy="12" r="12" fill="#f7931a"/><path fill="none" stroke="#fff" stroke-width="2.200" d="M9 6.500h4.500c3.500 0 3.500 5 0 5H10M10 11.500h4.500c3.500 0 3.500 5.500 0 5.500H8M10.500 6.500l-1.500 11M11.500 4v2.500M14 4v2.500M10.500 17.500V20M13 17.500V20"/>`,
  pet: svg`<path fill="#f2b51d" d="M4 19c-2-5 0-6 2-5 1 1 2 0 1-3 1-3 2-3 3-5 2-4 5-4 6-3l1 4c-1 4-2 5-1 8l1 4z"/><path fill="#fbe08a" d="M9 19c-1-4 3-5 3-9l2 9z"/><path fill="#1ba784" d="M15 4c1-3 5-3 7-2-1 4-4 6-7 5z"/><path stroke="#3a3120" stroke-width="2" stroke-dasharray="2 1" d="M2 22h20"/>`,
  pine: svg`<path fill="#0aa35a" d="M12 1 6.500 12 12 9.500l3.500 3 2.500-1z"/><path fill="#0aa35a" d="m5.500 14 5.500-2.500 4 4 4-2L24 24H0z"/>`,
};

const glyph = (name: string, size = 16) =>
  html`<svg width=${size} height=${size} viewBox="0 0 24 24" aria-hidden="true">${GLYPHS[name]}</svg>`;

const base = css`
  :host { display: block; }
  * { box-sizing: border-box; }
  button, input { font: inherit; color: inherit; background: none; border: 0; margin: 0; padding: 0; }
  button { display: inline-flex; align-items: center; justify-content: center; flex: none; white-space: nowrap; cursor: pointer; }
  svg { display: block; flex: none; }
  .icon { fill: none; stroke: currentColor; stroke-width: 1.2; }
`;

/* ---------- browser frame ---------- */

@customElement("browser-bar")
class BrowserBar extends LitElement {
  static styles = [base, css`
    :host { font: 14px/20px Roboto, "Noto Sans CJK SC", sans-serif; color: #1f2427; }
    .tabs { display: flex; height: 34px; background: #5ab7bf; align-items: stretch; padding-left: 8px; }
    .tab { display: flex; align-items: center; gap: 8px; width: 240px; padding: 0 12px; background: #b6e3e1; border-radius: 8px 8px 0 0; font-size: 12px; }
    .title { flex: 1; overflow: hidden; white-space: nowrap; -webkit-mask-image: linear-gradient(90deg, #000 86%, transparent); }
    .add { width: 44px; }
    .window { display: flex; margin-left: auto; height: 28px; }
    .window button { width: 46px; }
    .tools { display: flex; align-items: center; height: 37px; background: #b6e3e1; border-bottom: 1px solid #8fb0b4; padding-right: 8px; }
    .nav { display: flex; padding-left: 6px; padding-right: 6px; }
    .nav button { width: 32px; }
    .address { flex: 1; display: flex; align-items: center; height: 28px; border-radius: 14px; background: #ebf8f6; padding: 0 6px 0 12px; gap: 10px; }
    .address input {
      flex: 1; min-width: 0; height: 24px; outline: 0; font-size: 15px;
      background: linear-gradient(90deg, #263033 131px, #647377 131px); -webkit-background-clip: text; background-clip: text; -webkit-text-fill-color: transparent;
    }
    .address button { width: 22px; }
    .ext { display: flex; padding: 0 2px 0 7px; }
    .ext button { width: 32px; height: 28px; }
    .pill { height: 28px; border-radius: 14px; border: 1px solid #2d63b4; color: #2d5fae; font-size: 12px; gap: 7px; padding: 0 9px 0 3px; background: #addddc; }
    .update { margin-left: 4px; border-color: #33494b; color: #1f2427; background: #a5cfcc; padding: 0 6px 0 13px; }
  `];
  render() {
    return html`
      <div class="tabs">
        <div class="tab">
          ${glyph("site", 16)}<span class="title">BTCUSDTPERP 22339.2 ▼ −4.7</span>
          <button aria-label="关闭标签页">${glyph("tabClose", 10)}</button>
        </div>
        <button class="add" aria-label="新标签页">${glyph("tabAdd", 12)}</button>
        <div class="window">
          <button aria-label="标签搜索">${glyph("winChevron", 14)}</button>
          <button aria-label="最小化">${glyph("winMin", 14)}</button>
          <button aria-label="还原">${glyph("winMax", 14)}</button>
          <button aria-label="关闭">${glyph("winClose", 14)}</button>
        </div>
      </div>
      <div class="tools">
        <div class="nav">
          <button aria-label="后退">${glyph("back", 18)}</button>
          <button aria-label="前进">${glyph("forward", 18)}</button>
          <button aria-label="重新加载">${glyph("reload", 18)}</button>
        </div>
        <div class="address">
          ${glyph("padlock", 12)}
          <input aria-label="地址" value="cn.tradingview.com/chart/oeii1xli/" />
          <button aria-label="分享">${glyph("share", 16)}</button>
          <button aria-label="收藏">${glyph("bookmark", 16)}</button>
        </div>
        <div class="ext">
          ${["translate", "book", "redT", "lens", "shield", "caret", "puzzle", "panel"].map(
            (n) => html`<button aria-label=${n}>${glyph(n, n === "caret" ? 12 : 16)}</button>`)}
        </div>
        <button class="pill">${glyph("avatar", 22)}已暂停</button>
        <button class="pill update">更新${glyph("more", 14)}</button>
      </div>`;
  }
}

/* ---------- chart header ---------- */

@customElement("chart-header")
class ChartHeader extends LitElement {
  static styles = [base, css`
    :host { font: 14px/20px "Open Sans", "Noto Sans CJK SC", sans-serif; color: #131722; }
    .bar { display: flex; align-items: center; height: 38px; background: #fff; padding-right: 5px; }
    .bar > button { height: 38px; }
    .logo { width: 52px; }
    .symbol { padding: 0 12px; gap: 6px; color: #2962ff; font-weight: 700; font-size: 13px; }
    .add { width: 30px; }
    .sep { width: 1px; height: 22px; background: #e0e3eb; margin: 0 3px; }
    .wide { margin-left: 10px; margin-right: 4px; }
    .interval { padding: 0 6px; }
    .on { color: #2962ff; }
    .small { width: 22px; }
    .mid { width: 38px; }
    .labelled { padding: 0 8px; gap: 1px; }
    .gap { flex: 1; }
    .layout { flex-direction: column; line-height: 14px; width: 62px; }
    .save { font-size: 12px; line-height: 13px; color: #2962ff; }
    .dim { color: #b2b5be; }
    .bar > .publish { height: 28px; margin-left: 4px; padding: 0 12px; border-radius: 14px; background: #2962ff; color: #fff; font-weight: 500; }
  `];
  render() {
    return html`
      <div class="bar">
        <button class="logo" aria-label="菜单">${glyph("pet", 24)}</button>
        <button class="symbol">${glyph("bitcoin", 18)}BTCUSDT</button>
        <button class="add" aria-label="对比">${icon("plus")}</button>
        <span class="sep wide"></span>
        ${["1分", "5分", "30分", "3小时", "天", "周", "月"].map(
          (t) => html`<button class="interval ${t === "30分" ? "on" : ""}">${t}</button>`)}
        <button class="small" aria-label="更多周期">${icon("down", 24)}</button>
        <span class="sep"></span>
        <button class="mid" aria-label="图表类型">${icon("candles")}</button>
        <span class="sep"></span>
        <button class="labelled">${icon("indicators")}指标</button>
        <button class="small" aria-label="指标模板">${icon("down", 24)}</button>
        <button class="mid" aria-label="布局网格">${icon("grid")}</button>
        <span class="sep"></span>
        <button class="labelled">${icon("alarmAdd")}警报</button>
        <button class="labelled">${icon("rewind")}回放</button>
        <span class="sep"></span>
        <button class="mid" aria-label="撤销">${icon("undo")}</button>
        <button class="mid dim" aria-label="重做">${icon("redo")}</button>
        <span class="gap"></span>
        <button class="mid" aria-label="选择布局">${icon("frame")}</button>
        <button class="layout"><span>未命名</span><span class="save">保存</span></button>
        <button class="small" aria-label="管理布局">${icon("down", 24)}</button>
        <span class="sep"></span>
        <button class="mid" aria-label="搜索">${icon("search")}</button>
        <button class="mid" aria-label="设置">${icon("gear")}</button>
        <button class="mid" aria-label="全屏">${icon("full")}</button>
        <button class="mid" aria-label="快照">${icon("camera")}</button>
        <button class="publish">发表</button>
      </div>`;
  }
}

/* ---------- side tool bars ---------- */

@customElement("draw-tools")
class DrawTools extends LitElement {
  static styles = [base, css`
    :host { color: #131722; background: #fff; border-radius: 0 4px 0 0; }
    .rail { display: flex; flex-direction: column; align-items: center; height: 100%; padding: 7px 0 16px; }
    button { width: 36px; height: 36px; }
    .on svg { background: #2962ff; color: #fff; border-radius: 4px; }
    .sep { width: 36px; height: 1px; margin: 6px 0; background: #e0e3eb; }
    .last { margin-top: auto; }
  `];
  render() {
    const group = (names: string[]) => names.map((n) => {
      const on = ["magnet", "pencilLock", "eyeOff", "star"].includes(n);
      return html`<button class="${on ? "on" : ""} ${n === "star" ? "last" : ""}" aria-label=${n}>${icon(n, on ? 30 : 28)}</button>`;
    });
    return html`<nav class="rail" aria-label="绘图工具">
      ${group(["cross", "trend", "fib", "brush", "text", "pattern", "forecast", "heart"])}
      <span class="sep"></span>${group(["ruler", "zoom"])}
      <span class="sep"></span>${group(["magnet", "pencilLock", "lock", "eyeOff"])}
      <span class="sep"></span>${group(["trash", "star"])}
    </nav>`;
  }
}

@customElement("widget-tools")
class WidgetTools extends LitElement {
  static styles = [base, css`
    :host { color: #2a2e39; background: #fff; border-radius: 4px 0 0 0; }
    .rail { display: flex; flex-direction: column; align-items: center; height: 100%; padding: 1px 0; }
    button { width: 44px; height: 46px; position: relative; }
    .sep { width: 34px; height: 2px; margin: 4px 0; background: #e0e3eb; }
    .push { flex: 1; }
    .badge { position: absolute; right: 4px; top: 5px; width: 14px; height: 14px; border-radius: 50%; background: #f23645; color: #fff; font: 700 11px/14px "Open Sans", sans-serif; text-align: center; }
  `];
  render() {
    const group = (names: string[]) => names.map((n) => html`
      <button aria-label=${n}>${icon(n)}${n === "notes" ? html`<span class="badge">1</span>` : ""}</button>`);
    return html`<nav class="rail" aria-label="小工具">
      ${group(["list", "alarm", "dataWin", "flame", "calendar", "bulb"])}
      <span class="sep"></span>${group(["cloud", "chats", "notes", "live", "stream", "bell"])}
      <span class="sep"></span>${group(["wave", "dom"])}
      <span class="push"></span>${group(["layers", "help"])}
    </nav>`;
  }
}

/* ---------- price, volume and MACD panes ---------- */

@customElement("price-chart")
class PriceChart extends LitElement {
  static styles = [base, css`
    :host { position: relative; font: 13px/16px "Open Sans", "Noto Sans CJK SC", sans-serif; color: #131722; }
    .plot { width: 100%; height: auto; overflow: visible; }
    .crisp { shape-rendering: crispEdges; }
    .label { font-size: 12px; fill: #131722; }
    .mid { text-anchor: middle; }
    .bold { font-weight: 700; }
    .light { fill: #fff; }
    .soft { fill: #d4edea; }
    .note { font: 12px Roboto, "Noto Sans CJK SC", sans-serif; fill: #ff00e5; }
    .path { fill: none; stroke-linejoin: round; }
    .legend { position: absolute; left: 9px; top: 7px; display: flex; flex-direction: column; align-items: flex-start; }
    .head { display: flex; align-items: center; height: 20px; white-space: nowrap; }
    .name { font-size: 15px; background: rgba(255, 255, 255, .5); }
    .flag { margin-left: 18px; }
    .status { width: 16px; height: 16px; margin: 0 16px 0 20px; border: 4px solid #cfeee8; border-radius: 50%; background: #089981; }
    .teal { color: #26a69a; }
    .quote { display: flex; align-items: center; gap: 8px; height: 24px; margin: 6px 0 5px -1px; font-size: 12px; }
    .quote button { height: 24px; padding: 0 8px; border: 1px solid; border-radius: 4px; background: #fff; }
    .sell { color: #d32f3f; }
    .buy { color: #1e53e5; }
    .study { display: flex; gap: 8px; height: 24px; align-items: center; font-size: 12px; color: #50535e; white-space: nowrap; }
    .study > span { background: rgba(255, 255, 255, .5); }
    .study > span + .v1 { margin-left: 7px; }
    .study > span + .v2 { margin-left: 10px; }
    .dark { color: #2a2e39; }
    .green { color: #43a047; }
    .pink { color: #d81b60; }
    .yellow { color: #ffeb3b; }
    .off { color: #a3a6af; }
    .off button { color: #131722; }
    .fold { width: 29px; height: 21px; border: 1px solid #d1d4dc; border-radius: 3px; background: #fff; margin-top: 1px; }
    .macd { position: absolute; left: 9px; top: 531px; }
    .rose { color: #ffcdd2; }
    .blue { color: #2962ff; }
    .amber { color: #f57c00; }
    .float { position: absolute; left: 10px; top: 689px; display: flex; align-items: center; height: 38px; background: #fff; border-radius: 6px; box-shadow: 0 2px 5px rgba(0, 0, 0, .3); color: #131722; }
    .float button { width: 38px; height: 38px; }
    .float .grip { width: 24px; }
    .brand { position: absolute; left: 12px; top: 755px; display: flex; align-items: center; gap: 7px; font: 600 20px/24px "Open Sans", sans-serif; }
  `];

  private panes() {
    const rows = Array.from({ length: 15 }, (_, i) => 133.5 + i * 34);
    const macdRows = Array.from({ length: 7 }, (_, i) => 658 + Math.round(i * 38.4));
    return svg`
      <g class="crisp" stroke="#f0f1f3">
        ${rows.map((y) => svg`<path d="M56 ${y}H1806"/>`)}
        ${macdRows.map((y) => svg`<path d="M56 ${y + 0.5}H1806"/>`)}
        ${TIMES.map((_, i) => svg`<path d="M${Math.floor(75 + i * 141.5) + 0.5} 112V900"/>`)}
        <path stroke="#e0e3eb" d="M56 637.500H1870"/>
      </g>
      <g class="crisp" fill-opacity=".75">
        ${VOLUME.map((v, i) => svg`<rect x=${pixelX(i) - 2} y=${VOL_BASE - v} width="5" height=${v} fill=${CANDLES[i]?.up ? "#26a69a" : "#ef5350"} />`)}
      </g>
      <polyline class="path" stroke="#ffeb3b" points=${average(10)} />
      <polyline class="path" stroke="#43a047" points=${average(5)} />
      <polyline class="path" stroke="#43a047" stroke-width="2" points=${MA76} />
      <polyline class="path" stroke="#d81b60" stroke-width="2" points=${MA199} />
      <g class="crisp">
        ${CANDLES.map((c, i) => {
          const x = pixelX(i);
          const color = c.up ? "#26a69a" : "#ef5350";
          return svg`<path stroke=${color} d="M${x + 0.5} ${c.high}V${c.low}"/><rect x=${x - 2} y=${c.top} width="5" height=${Math.max(1, c.bottom - c.top)} fill=${color} />`;
        })}
      </g>
      <path stroke="#26a69a" stroke-dasharray="1 2" class="crisp" d="M56 415.500H1806"/>
      <path stroke="#9598a1" stroke-dasharray="6 5" class="crisp" d="M56 773.500H1806"/>
      <g class="crisp">
        ${HISTOGRAM.map((v, i) => svg`<rect x=${pixelX(i) - 2} y=${v > 0 ? ZERO - v : ZERO} width="5" height=${Math.abs(v) + 1} fill=${histColor(v, HISTOGRAM[i - 1] ?? 99)} />`)}
      </g>
      <polyline class="path" stroke="#3f6fd8" stroke-width="1.2" points=${MACD_LINE} />
      <polyline class="path" stroke="#ef7f1a" stroke-width="1.2" points=${SIGNAL_LINE} />`;
  }

  private drawings() {
    return svg`
      <defs><marker id="tip" markerUnits="userSpaceOnUse" markerWidth="12" markerHeight="10" refX="9" refY="4" orient="auto">
        <path fill="#ff00e5" d="M0 0 11 4 0 8z"/></marker></defs>
      ${ARROWS.map(([a, b, c, d]) => svg`<path stroke="#ff00e5" stroke-width="2" marker-end="url(#tip)" d="M${a} ${b}L${c} ${d}"/>`)}
      <rect x="1381" y="426" width="345" height="128" rx="1" fill="none" stroke="#ff00e5" stroke-width="4"/>
      ${MARKS.map(([t, x, y]) => svg`<text class="note mid" x=${x} y=${y + 4}>${t}</text>`)}
      <text class="note" x="1508" y="406">2022-11-22以来的趋势线跌破</text>
      <text class="note" x="1423" y="461">下方区域盘整，短期难有好的买点，冲高有卖点</text>`;
  }

  private axes() {
    return svg`
      <text class="label" x="1815" y="130">USDT</text>
      <path fill="none" stroke="#131722" stroke-width="1.500" d="m1847 124 3 3 3-3"/>
      ${Array.from({ length: 14 }, (_, i) => svg`<text class="label" x="1815" y=${171 + i * 34}>${(23800 - i * 200).toFixed(1)}</text>`)}
      ${Array.from({ length: 7 }, (_, i) => svg`<text class="label" x="1815" y=${662 + Math.round(i * 38.4)}>${(300 - i * 100).toFixed(1).replace("-", "−")}</text>`)}
      <rect x="1806" y="407" width="59" height="31" rx="2" fill="#26a69a"/>
      <text class="label bold light" x="1815" y="420">22339.9</text>
      <text class="label soft" x="1815" y="434">08:23</text>
      <rect x="1806" y="815" width="52" height="17" fill="#ffcdd2"/>
      <text class="label" x="1815" y="828">−132.6</text>
      ${TIMES.map((t, i) => svg`<text class="label mid ${t === "3月" ? "bold" : ""}" x=${Math.floor(75 + i * 141.5)} y="918">${t}</text>`)}
      <g class="icon" transform="translate(1824 900)">${ICONS.sun}</g>`;
  }

  render() {
    const values = [["开", "22339.0"], ["高", "22350.0"], ["低", "22304.0"], ["收", "22339.9"]];
    return html`
      <svg class="plot" viewBox="56 112 1814 816" role="img" aria-label="BTCUSDT 30分钟图">
        ${this.panes()}${this.drawings()}${this.axes()}
      </svg>
      <div class="legend">
        <div class="head">
          <span class="name">Bitcoin / TetherUS PERPETUAL FUTURES · 30 · BINANCE</span>
          <svg class="flag" width="12" height="12" viewBox="0 0 12 12"><path fill="#f7525f" d="M0 0h12L8.500 6l3.500 6H0z"/></svg>
          <span class="status"></span>
          <span>${values.map(([k, v]) => html`${k}=<span class="teal">${v}</span> `)}<span class="teal">+0.9 (+0.00%)</span></span>
        </div>
        <div class="quote"><button class="sell">22339.3</button><span>0.1</span><button class="buy">22339.4</button></div>
        <div class="study"><span>MA 76 close 0 SMA 5</span><span class="v1 green">23346.9</span></div>
        <div class="study"><span>MA 199 close 0 SMA 5</span><span class="v1 pink">23406.3</span></div>
        <div class="study dark"><span>Vol · BTC 5</span><span class="v2 teal">6.157K</span><span class="green">12.379K</span></div>
        <div class="study dark"><span>Vol · BTC 10</span><span class="v2 teal">6.157K</span><span class="yellow">28.165K</span></div>
        <div class="study off"><span>DC 20</span><button aria-label="显示">${icon("hidden", 22)}</button></div>
        <button class="fold" aria-label="收起">${icon("up", 16)}</button>
      </div>
      <div class="study macd"><span>MACD 7 29 close 9 EMA EMA</span><span class="v1 rose">−132.6</span><span class="blue">−513.2</span><span class="amber">−380.6</span></div>
      <div class="float" role="toolbar" aria-label="收藏工具">
        <button class="grip" aria-label="移动">${icon("grip")}</button>
        ${["trend", "ray", "fib", "rect", "channel", "text", "line"].map((n) => html`<button aria-label=${n}>${icon(n)}</button>`)}
      </div>
      <div class="brand">
        <svg width="30" height="16" viewBox="0 0 30 16"><path d="M0 0h13v16H7V7H0zM23 0h7l-6.500 16h-7z"/><circle cx="17" cy="3.500" r="3.500"/></svg>
        TradingView
      </div>`;
  }
}

/* ---------- rows below the chart ---------- */

@customElement("bottom-area")
class BottomArea extends LitElement {
  static styles = [base, css`
    :host { display: flex; flex-direction: column; gap: 4px; flex: 1; font: 14px/20px "Open Sans", "Noto Sans CJK SC", sans-serif; color: #131722; }
    .row { display: flex; align-items: center; background: #fff; padding: 0 11px 0 16px; }
    .ranges { height: 39px; border-top: 1px solid #e0e3eb; border-radius: 0 0 4px 4px; gap: 13px; }
    .sep { width: 1px; height: 24px; background: #e0e3eb; }
    .push { margin-left: auto; }
    .panel { flex: 1; background: #fff; border-radius: 4px 4px 0 0; overflow: hidden; }
    .tabs { height: 38px; gap: 32px; padding-right: 7px; }
    .drop { gap: 2px; margin-right: -18px; }
    .on { color: #2962ff; }
    .end { gap: 8px; display: flex; }
    .script { height: 31px; padding-top: 7px; border-top: 1px solid #e0e3eb; gap: 20px; font-size: 13px; }
    .title { display: flex; gap: 8px; font-weight: 700; font-size: 14px; padding-left: 3px; }
    .more { margin-left: -6px; }
  `];
  render() {
    return html`
      <div class="row ranges">
        ${["1天", "5天", "1个月", "3个月", "6个月", "YTD", "1年", "5年", "全部"].map((t) => html`<button>${t}</button>`)}
        <span class="sep"></span><button aria-label="前往">${icon("goto")}</button>
        <button class="push">12:51:37 (UTC+8)</button><span class="sep"></span>
        <button>%</button><button>log</button><button>自动</button>
      </div>
      <div class="panel">
        <div class="row tabs">
          <button class="drop">股票筛选器${icon("down")}</button>
          <button class="on">Pine编辑器</button><button>策略测试器</button><button>交易面板</button>
          <span class="end push"><button aria-label="最小化">${icon("minimize")}</button><button aria-label="最大化">${icon("full")}</button></span>
        </div>
        <div class="row script">
          <span class="title">${glyph("pine", 20)}无标题脚本</span>
          <button aria-label="搜索">${icon("search", 24)}</button>
          <button class="push">打开</button><button>保存</button><button>添加到图表</button><button class="on">发表脚本</button>
          <button class="more" aria-label="更多">${icon("dots")}</button>
        </div>
      </div>`;
  }
}

@customElement("task-bar")
class TaskBar extends LitElement {
  static styles = [base, css`
    :host { font: 13px/19px "Open Sans", "Noto Sans CJK SC", sans-serif; color: #fff; }
    .bar { display: flex; height: 40px; background: linear-gradient(90deg, #22383f, #1d2f40 50%, #1b2942); padding-right: 10px; }
    button { width: 49px; height: 40px; }
    .run { position: relative; }
    .run::after { content: ""; position: absolute; left: 5px; right: 5px; bottom: 0; height: 3px; background: #76b9ed; }
    .now { margin-left: 10px; background: #4b5f68; }
    .now::after { left: 0; right: 0; }
    .clock { margin-left: auto; padding-top: 1px; text-align: center; }
  `];
  render() {
    const idle = ["windows", "search", "tasks", "edge"];
    const running = ["chromeA", "folder", "chromeB", "q", "pdf", "monitor", "excel", "telegram", "wechat"];
    return html`<footer class="bar">
      ${idle.map((n) => html`<button aria-label=${n}>${glyph(n, n === "edge" ? 24 : 18)}</button>`)}
      ${running.map((n) => html`<button class="run" aria-label=${n}>${glyph(n, 24)}</button>`)}
      <button class="run now" aria-label="Chrome">${glyph("chrome", 24)}</button>
      <time class="clock">12:51<br />2023/3/3</time>
    </footer>`;
  }
}

@customElement("app-root")
class AppRoot extends LitElement {
  static styles = [base, css`
    .page { display: flex; flex-direction: column; min-height: 100vh; background: #e0e3eb; }
    .work { flex: 1; display: grid; grid-template-columns: 52px minmax(0, 1fr) 45px; column-gap: 4px; padding-top: 3px; }
    .center { display: flex; flex-direction: column; min-width: 0; margin-right: 1px; }
    price-chart { background: #fff; border-radius: 4px 4px 0 0; }
  `];
  render() {
    return html`<div class="page">
      <browser-bar></browser-bar>
      <chart-header></chart-header>
      <main class="work">
        <draw-tools></draw-tools>
        <div class="center"><price-chart></price-chart><bottom-area></bottom-area></div>
        <widget-tools></widget-tools>
      </main>
      <task-bar></task-bar>
    </div>`;
  }
}
